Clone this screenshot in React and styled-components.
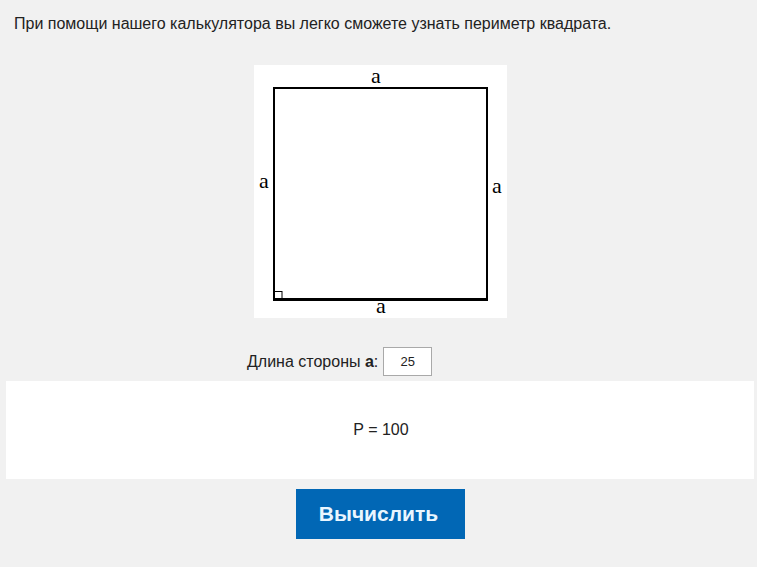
import React, { useState } from 'react'
import styled, { createGlobalStyle } from 'styled-components'

const GlobalStyle = createGlobalStyle`
  html, body {
    margin: 0;
    padding: 0;
    background: #f1f1f1;
    font-family: "Liberation Sans", Arial, sans-serif;
    color: #222;
  }
`

const Page = styled.div`
  width: 757px;
  height: 567px;
  display: flex;
  flex-direction: column;
  overflow: hidden;
`

const Intro = styled.p`
  margin: 0;
  padding: 15px 0 0 14px;
  font-size: 16px;
  line-height: 17px;
`

const Figure = styled.div`
  align-self: flex-start;
  margin: 33px 0 0 254px;
  width: 253px;
  height: 253px;
  background: #fff;

  svg {
    display: block;
    overflow: visible;
  }
`

const InputRow = styled.div`
  display: flex;
  align-items: center;
  gap: 5px;
  margin: 29px 0 0 247px;
  font-size: 16px;

  b {
    font-weight: bold;
  }
`

const SideInput = styled.input`
  width: 49px;
  height: 29px;
  box-sizing: border-box;
  border: 1px solid #a9a9a9;
  background: #fff;
  text-align: center;
  font-family: "Liberation Sans", Arial, sans-serif;
  font-size: 13px;
  color: #222;
  padding: 0;
  outline: none;
`

const Result = styled.div`
  margin: 5px 3px 0 6px;
  height: 98px;
  background: #fff;
  display: flex;
  align-items: center;
  justify-content: center;
  padding-left: 2px;
  font-size: 16px;
`

const Button = styled.button`
  align-self: flex-start;
  margin: 10px 0 0 296px;
  width: 169px;
  height: 50px;
  border: none;
  background: #0167b5;
  color: #eaf6ff;
  font-family: "Liberation Sans", Arial, sans-serif;
  font-weight: bold;
  font-size: 21px;
  padding: 0 4px 0 0;
  cursor: pointer;
`

const SquareDrawing = () => (
  <svg width="253" height="253" viewBox="0 0 253 253">
    <g stroke="#000" fill="none">
      <line x1="20" y1="23" x2="233" y2="23" strokeWidth="2" />
      <line x1="20" y1="22" x2="20" y2="235" strokeWidth="2" />
      <line x1="233" y1="22" x2="233" y2="235" strokeWidth="2" />
      <line x1="19" y1="234.5" x2="234" y2="234.5" strokeWidth="3" />
      <rect x="20.5" y="226.5" width="7.5" height="7.5" strokeWidth="1" />
    </g>
    <g fontFamily='"Liberation Serif", "Times New Roman", serif' fontSize="22" fill="#000">
      <text x="117" y="18">a</text>
      <text x="5" y="123">a</text>
      <text x="238" y="128">a</text>
      <text x="122" y="248">a</text>
    </g>
  </svg>
)

export default function App() {
  const [side, setSide] = useState('25')
  const n = parseFloat(side)
  const perimeter = isNaN(n) ? '' : n * 4

  return (
    <Page>
      <GlobalStyle />
      <Intro>При помощи нашего калькулятора вы легко сможете узнать периметр квадрата.</Intro>
      <Figure>
        <SquareDrawing />
      </Figure>
      <InputRow>
        <span>Длина стороны <b>a</b>:</span>
        <SideInput value={side} onChange={e => setSide(e.target.value)} />
      </InputRow>
      <Result>P = {perimeter}</Result>
      <Button>Вычислить</Button>
    </Page>
  )
}
